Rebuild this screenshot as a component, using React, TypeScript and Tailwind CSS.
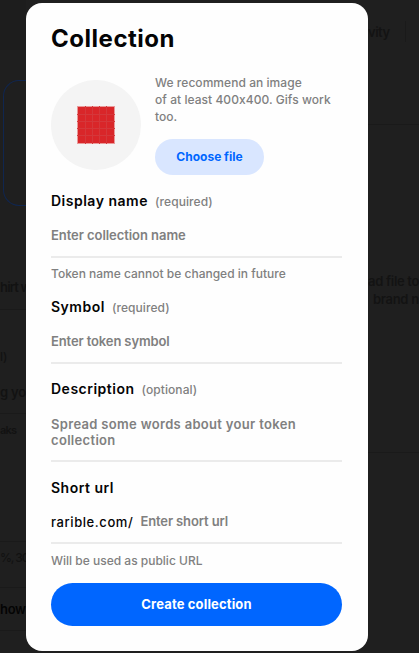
import type { ReactNode } from "react";

function Label({ children, note }: { children: ReactNode; note?: string }) {
  return (
    <label className="flex h-5 items-center gap-[7px] text-[14px] leading-5 font-semibold tracking-[0.5px] text-[#040405]">
      <span>{children}</span>
      {note && <span className="pt-px text-[12px] font-medium tracking-[0.08px] text-[#808080]">{note}</span>}
    </label>
  );
}

function PageLeft() {
  return (
    <aside className="flex h-full flex-col overflow-hidden text-[13px] leading-4 font-semibold text-[#121212]">
      <div className="h-[50px] shrink-0 bg-[#1d1d1d]" />
      <div className="mt-[30px] ml-[3px] h-[126px] shrink-0 rounded-l-[16px] border border-r-0 border-[#10264f]" />
      <div className="flex h-[104px] shrink-0 items-end border-b border-[#1a1a1a] pb-[14px] tracking-[-0.8px]">hirt w</div>
      <div className="flex h-[104px] shrink-0 flex-col justify-between border-b border-[#1a1a1a] pt-[39px] pb-[13px]">
        <span className="text-[12px] font-medium">l)</span>
        <span className="tracking-[-0.2px]">g yo</span>
      </div>
      <div className="h-[128px] shrink-0 border-b border-[#1a1a1a] pt-2 text-[11px] tracking-[-0.8px]">aks</div>
      <div className="h-[46px] shrink-0 border-b border-[#1a1a1a] pt-2 text-[12px] font-medium tracking-[-1.1px]">%, 30</div>
      <div className="h-[43px] shrink-0 border-b border-[#1a1a1a] pt-[13px] tracking-[-0.3px] text-[#040404]">how</div>
    </aside>
  );
}

function PageRight() {
  return (
    <aside className="flex h-full flex-col overflow-hidden text-[13px] leading-4 font-semibold text-[#131313]">
      <div className="flex h-[125px] shrink-0 items-start border-b border-[#1a1a1a] pt-[21px]">
        <div className="flex h-[21px] w-[38px] items-center border-r border-[#1a1a1a] pt-px tracking-[-0.5px]">vity</div>
      </div>
      <div className="h-[328px] shrink-0 border-b border-[#1a1a1a] pt-[147px] leading-[18px]">
        <p className="tracking-[-0.3px]">ad file to</p>
        <p className="pl-[5px] tracking-[-0.3px]">brand n</p>
      </div>
    </aside>
  );
}

function Swatch() {
  return (
    <svg width="38" height="38" viewBox="0 0 38 38" aria-hidden="true">
      <rect width="38" height="38" fill="#e99a9a" />
      <rect x="1" y="1" width="36" height="36" fill="#d92629" />
      <path d="M8.5 0V38M15.5 0V38M22.5 0V38M29.5 0V38M0 8.5H38M0 15.5H38M0 22.5H38M0 29.5H38" stroke="#d5373a" />
    </svg>
  );
}

export default function App() {
  return (
    <div className="grid h-[653px] w-[419px] grid-cols-[26px_342px_51px] overflow-hidden bg-[#1f1f1f] font-['Inter','Liberation_Sans',sans-serif] whitespace-nowrap [font-feature-settings:'calt'_0]">
      <PageLeft />
      <main className="mt-[3px] flex h-[648px] flex-col rounded-[16px] bg-[#fefefe] px-[25px] pt-5 pb-[25px] text-[13px] font-medium text-[#808080]">
        <h1 className="text-[24px] leading-8 font-bold tracking-[0.52px] text-[#040405]">Collection</h1>
        <header className="mt-5 flex h-[100px] gap-[14px] pr-px">
          <div className="mt-[5px] flex size-[90px] shrink-0 items-center justify-center rounded-full bg-[#f4f4f4]">
            <Swatch />
          </div>
          <div className="flex flex-col items-start justify-between">
            <p className="-mt-px text-[12px] leading-[17px] tracking-[0.05px]">We recommend an image<br />of at least 400x400. Gifs work<br />too.</p>
            <button className="h-9 w-[109px] rounded-full bg-[#d9e6ff] text-[12px] font-bold text-[#0066ff]">Choose file</button>
          </div>
        </header>
        <div className="mt-4 flex flex-col gap-[15px] pr-px">
          <section>
            <Label note="(required)">Display name</Label>
            <div className="mt-3.5 h-[33px] border-b-2 border-[#ebebeb] leading-5 font-semibold tracking-[-0.06px]">Enter collection name</div>
            <p className="mt-2 text-[12px] leading-4">Token name cannot be changed in future</p>
          </section>
          <section>
            <Label note="(required)">Symbol</Label>
            <div className="mt-3.5 h-[33px] border-b-2 border-[#ebebeb] leading-5 font-semibold tracking-[-0.12px]">Enter token symbol</div>
          </section>
          <section>
            <Label note="(optional)">Description</Label>
            <p className="mt-[17px] h-[46px] border-b-2 border-[#ebebeb] leading-4 font-semibold tracking-[0.32px]">Spread some words about your token<br />collection</p>
          </section>
          <section className="pt-px">
            <Label>Short url</Label>
            <div className="mt-[13px] flex h-[33px] gap-[7px] border-b-2 border-[#ebebeb] leading-5">
              <span className="pt-px tracking-[0.58px] text-[#040405]">rarible.com/</span>
              <span className="font-semibold tracking-[-0.12px]">Enter short url</span>
            </div>
            <p className="mt-[9px] text-[12px] leading-4">Will be used as public URL</p>
          </section>
        </div>
        <div className="mt-3.5 flex pr-px">
          <button className="h-[43px] flex-1 rounded-full bg-[#0066ff] text-[13px] font-bold tracking-[0.15px] text-white">Create collection</button>
        </div>
      </main>
      <PageRight />
    </div>
  );
}
